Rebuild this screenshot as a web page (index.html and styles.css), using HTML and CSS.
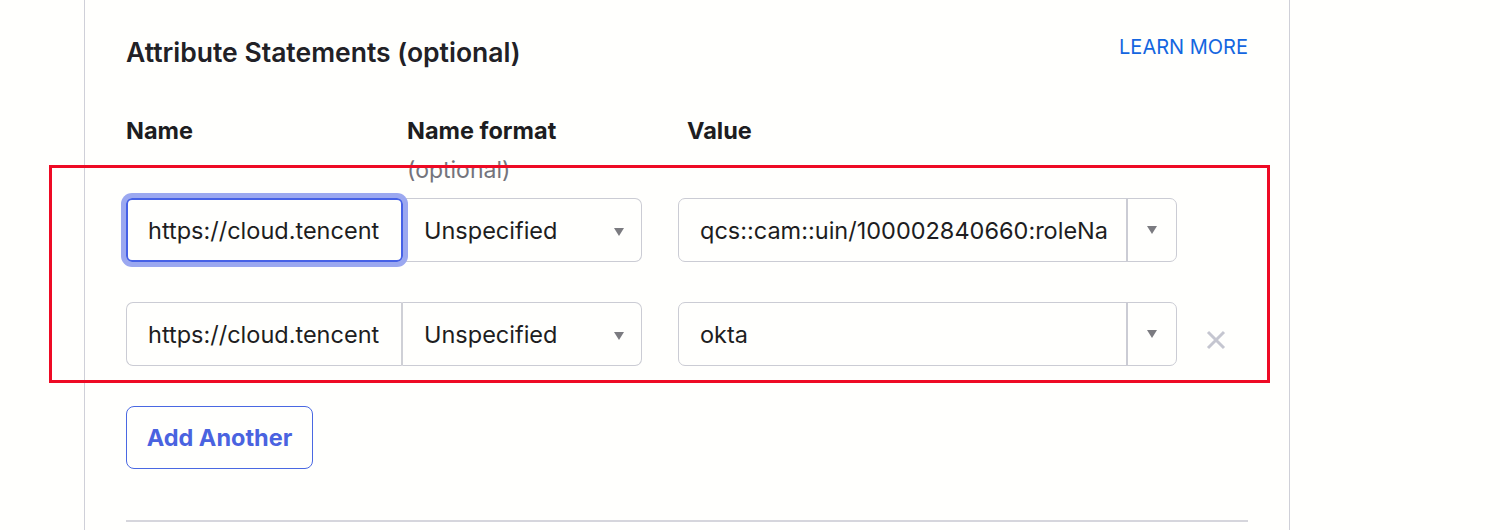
FILE: index.html
```html
<!DOCTYPE html>
<html>
<head>
<meta charset="utf-8">
<link rel="stylesheet" href="styles.css">
</head>
<body>
<div class="card">
  <div class="head-row">
    <h2 class="title">Attribute Statements (optional)</h2>
    <a class="learn" href="#">LEARN MORE</a>
  </div>
  <div class="labels">
    <div class="lab lab-name">Name</div>
    <div class="lab lab-format">Name format<span class="opt">(optional)</span></div>
    <div class="lab lab-value">Value</div>
  </div>
  <div class="rows">
    <div class="row">
      <div class="pair">
        <div class="name-input focused">https://cloud.tencent</div>
        <div class="select">Unspecified<span class="caret"></span></div>
      </div>
      <div class="combo">
        <div class="combo-text">qcs::cam::uin/100002840660:roleNa</div>
        <div class="combo-btn"><span class="caret"></span></div>
      </div>
    </div>
    <div class="row">
      <div class="pair">
        <div class="name-input">https://cloud.tencent</div>
        <div class="select">Unspecified<span class="caret"></span></div>
      </div>
      <div class="combo">
        <div class="combo-text">okta</div>
        <div class="combo-btn"><span class="caret"></span></div>
      </div>
      <svg class="remove" width="22" height="22" viewBox="0 0 22 22"><path d="M3 3L19 19M19 3L3 19" stroke="#c5c6d0" stroke-width="3" stroke-linecap="butt"/></svg>
    </div>
  </div>
  <button class="add">Add Another</button>
  <div class="divider"></div>
</div>
<div class="annot"></div>
</body>
</html>
```
FILE: styles.css
```css
html, body {
  margin: 0;
  padding: 0;
  background: #fffffd;
  font-family: Inter, "Noto Sans", sans-serif;
  color: #1d1d21;
}
body {
  width: 1500px;
  height: 530px;
  overflow: hidden;
  position: relative;
}
.card {
  margin-left: 84px;
  width: 1122px;
  height: 530px;
  padding: 0 41px;
  border-left: 1px solid #cfd0d8;
  border-right: 1px solid #cfd0d8;
}
.head-row {
  display: flex;
  justify-content: space-between;
  align-items: flex-start;
  padding-top: 36px;
}
.title {
  margin: 0;
  font-size: 26.5px;
  line-height: 32px;
  font-weight: 600;
  color: #212126;
}
.learn {
  font-size: 20px;
  line-height: 24px;
  color: #1466e0;
  text-decoration: none;
  margin-top: -1px;
}
.labels {
  display: flex;
  margin-top: 48px;
  font-size: 23.5px;
  line-height: 30px;
  font-weight: 700;
  color: #1d1d21;
}
.lab-name { width: 281px; }
.lab-format { width: 280px; display: flex; flex-direction: column; }
.opt {
  font-weight: 400;
  color: #74747c;
  font-size: 23px;
  line-height: 28px;
  margin-top: 10px;
}
.rows {
  display: flex;
  flex-direction: column;
  gap: 40px;
  margin-top: 14px;
}
.row {
  display: flex;
  align-items: center;
  height: 64px;
  font-size: 23.5px;
}
.pair {
  display: flex;
  height: 64px;
}
.name-input {
  box-sizing: border-box;
  width: 277px;
  padding-left: 21px;
  border: 1px solid #cbccd4;
  border-right: 2px solid #cfd0d6;
  border-radius: 7px 0 0 7px;
  display: flex;
  align-items: center;
  white-space: nowrap;
  overflow: hidden;
}
.name-input.focused {
  border: 2px solid #4661e6;
  border-radius: 6px;
  padding-left: 20px;
  box-shadow: 0 0 0 5px #9ba8f0;
  position: relative;
  z-index: 1;
}
.select {
  box-sizing: border-box;
  width: 239px;
  padding-left: 21px;
  border: 1px solid #cbccd4;
  border-left: none;
  border-radius: 0 7px 7px 0;
  display: flex;
  align-items: center;
  position: relative;
}
.caret {
  width: 0;
  height: 0;
  border-left: 5px solid transparent;
  border-right: 5px solid transparent;
  border-top: 8px solid #7b7b80;
}
.select .caret {
  position: absolute;
  right: 17px;
  top: 29px;
}
.combo {
  margin-left: 36px;
  box-sizing: border-box;
  width: 499px;
  height: 64px;
  border: 1px solid #cbccd4;
  border-radius: 7px;
  display: flex;
}
.combo-text {
  flex: 1;
  padding-left: 21px;
  display: flex;
  align-items: center;
  border-right: 2px solid #cbccd4;
  white-space: nowrap;
  overflow: hidden;
}
.combo-btn {
  width: 48px;
  display: flex;
  align-items: center;
  justify-content: center;
}
.remove {
  margin-left: 28px;
  margin-top: 12px;
}
.add {
  margin-top: 40px;
  box-sizing: border-box;
  width: 187px;
  height: 63px;
  border: 1.5px solid #4a68e2;
  border-radius: 8px;
  background: transparent;
  color: #4a63e0;
  font-family: Inter, "Noto Sans", sans-serif;
  font-size: 23.5px;
  font-weight: 700;
  padding: 0;
  display: block;
}
.divider {
  margin-top: 51px;
  height: 2px;
  background: #d6d6dc;
}
.annot {
  position: absolute;
  left: 49px;
  top: 165px;
  width: 1215px;
  height: 212px;
  border: 3px solid #ee0a24;
  pointer-events: none;
}
```
